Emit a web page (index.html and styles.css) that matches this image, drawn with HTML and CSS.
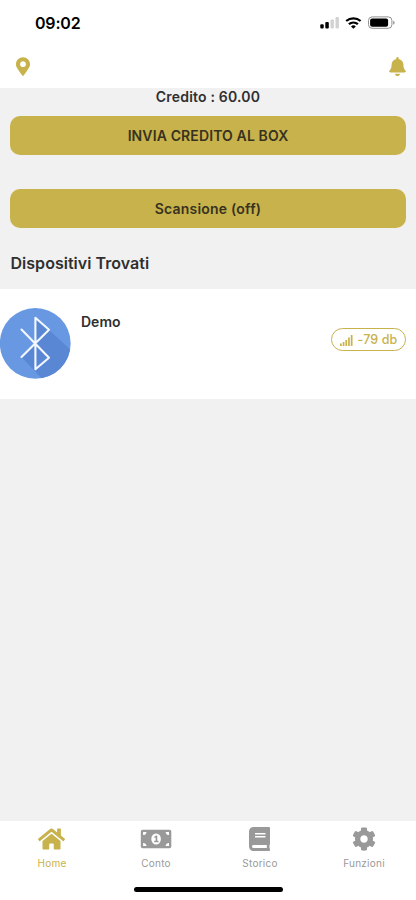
FILE: index.html
```html
<!DOCTYPE html>
<html lang="it">
<head>
<meta charset="utf-8">
<meta name="viewport" content="width=device-width, initial-scale=1">
<title>Dispositivi</title>
<link rel="stylesheet" href="styles.css">
</head>
<body>
<div class="app">
  <div class="status">
    <span class="time">09:02</span>
    <svg class="indicators" width="76" height="14" viewBox="0 0 76 14">
      <rect x="0.3" y="8.2" width="3.4" height="4.4" rx="1"/>
      <rect x="5.3" y="6" width="3.5" height="6.6" rx="1"/>
      <rect class="dim" x="10.5" y="3.5" width="3.4" height="9.1" rx="1"/>
      <rect class="dim" x="15.5" y="1" width="3.4" height="11.6" rx="1"/>
      <g class="wifi"><path d="M26.2 5a11 11 0 0 1 14.4 0"/><path d="M28.9 8.2a7 7 0 0 1 9 0"/></g>
      <path d="M33.4 12.8 31 10.4a3.5 3.5 0 0 1 4.8 0Z"/>
      <rect class="shell" x="48.5" y="0.9" width="23.4" height="11.4" rx="3.6"/>
      <rect x="50.1" y="2.5" width="18" height="8.2" rx="2"/>
      <path class="tip" d="M73.1 4.7v4q1.5-.5 1.5-2t-1.5-2Z"/>
    </svg>
  </div>
  <header class="topbar">
    <svg width="14" height="19" viewBox="0 0 384 512"><path d="M172.268 501.67C26.97 291.031 0 269.413 0 192 0 85.961 85.961 0 192 0s192 85.961 192 192c0 77.413-26.97 99.031-172.268 309.67-9.535 13.774-29.93 13.773-39.464 0zM192 272c44.183 0 80-35.817 80-80s-35.817-80-80-80-80 35.817-80 80 35.817 80 80 80z"/></svg>
    <svg width="17" height="19" viewBox="0 0 448 512"><path d="M224 512c35.32 0 63.97-28.65 63.97-64H160.03c0 35.35 28.65 64 63.97 64zm215.39-149.71c-19.32-20.76-55.47-51.99-55.47-154.29 0-77.7-54.48-139.9-127.94-155.16V32c0-17.67-14.32-32-31.98-32s-31.98 14.33-31.98 32v20.84C118.56 68.1 64.08 130.3 64.08 208c0 102.3-36.15 133.53-55.47 154.29-6 6.45-8.66 14.16-8.61 21.71.11 16.4 12.98 32 32.1 32h383.8c19.12 0 32-15.6 32.1-32 .05-7.55-2.61-15.27-8.61-21.71z"/></svg>
  </header>
  <main class="content">
    <p class="credit">Credito : 60.00</p>
    <button class="button send">INVIA CREDITO AL BOX</button>
    <button class="button scan">Scansione (off)</button>
    <h2 class="heading">Dispositivi Trovati</h2>
    <section class="device">
      <svg class="avatar" width="71" height="71" viewBox="0 0 71 71">
        <defs><clipPath id="disc"><circle cx="35.25" cy="35.4" r="35.4"/></clipPath></defs>
        <circle class="disc" cx="35.25" cy="35.4" r="35.4"/>
        <path class="shade" clip-path="url(#disc)" d="M35.3 10 49 22l24 22v30H45L21.5 49 35.3 35.5Z"/>
        <path class="rune" d="M21.5 21.5 49 49.8 35.4 61.3V9.7L49 21.8 21.5 49"/>
      </svg>
      <span class="name">Demo</span>
      <span class="signal">
        <svg width="13" height="11" viewBox="0 0 13 11"><path d="M0 8.5h1.7V11H0ZM2.7 7h1.7v4H2.7ZM5.4 5h1.7v6H5.4ZM8.1 2.6h1.7V11H8.1ZM10.8 0h1.7v11h-1.7Z"/></svg>
        <span>-79 db</span>
      </span>
    </section>
  </main>
  <nav class="tabs">
    <a class="tab active">
      <svg width="27" height="24" viewBox="0 0 576 512"><path d="M280.37 148.26L96 300.11V464a16 16 0 0 0 16 16l112.06-.29a16 16 0 0 0 15.92-16V368a16 16 0 0 1 16-16h64a16 16 0 0 1 16 16v95.64a16 16 0 0 0 16 16.05L464 480a16 16 0 0 0 16-16V300L295.67 148.26a12.19 12.19 0 0 0-15.3 0zM571.6 251.47L488 182.56V44.05a12 12 0 0 0-12-12h-56a12 12 0 0 0-12 12v72.61L318.47 43a48 48 0 0 0-61 0L4.34 251.47a12 12 0 0 0-1.6 16.9l25.5 31A12 12 0 0 0 45.15 301l235.22-193.74a12.19 12.19 0 0 1 15.3 0L530.9 301a12 12 0 0 0 16.9-1.6l25.5-31a12 12 0 0 0-1.7-16.93z"/></svg>
      <span>Home</span>
    </a>
    <a class="tab">
      <svg width="32" height="24" viewBox="0 0 32 24">
        <rect x="0.8" y="2.7" width="30.5" height="18.6" rx="1.8"/>
        <path class="cut" d="M3.1 5h3.4a3.4 3.4 0 0 1-3.4 3.1ZM29 5h-3.4A3.4 3.4 0 0 0 29 8.1ZM3.1 19v-3.1A3.4 3.4 0 0 1 6.5 19ZM29 19v-3.1a3.4 3.4 0 0 0-3.4 3.1Z"/>
        <ellipse class="cut" cx="16.1" cy="12" rx="4.8" ry="5.6"/>
        <path d="M14.2 9.8 16.1 8.4h1.2v5.4h1.2v1.4h-4.3v-1.4h1.4v-3.4l-.9.6Z"/>
      </svg>
      <span>Conto</span>
    </a>
    <a class="tab">
      <svg width="22" height="24" viewBox="0 0 448 512" preserveAspectRatio="xMinYMid meet"><path d="M448 360V24c0-13.3-10.7-24-24-24H96C43 0 0 43 0 96v320c0 53 43 96 96 96h328c13.3 0 24-10.7 24-24v-16c0-7.5-3.5-14.3-8.9-18.7-4.2-15.4-4.2-59.3 0-74.7 5.4-4.3 8.9-11.1 8.9-18.6zM128 134c0-3.3 2.7-6 6-6h212c3.3 0 6 2.7 6 6v20c0 3.3-2.7 6-6 6H134c-3.3 0-6-2.7-6-6v-20zm0 64c0-3.3 2.7-6 6-6h212c3.3 0 6 2.7 6 6v20c0 3.3-2.7 6-6 6H134c-3.3 0-6-2.7-6-6v-20zm253.4 250H96c-17.7 0-32-14.3-32-32 0-17.6 14.4-32 32-32h285.4c-1.9 17.1-1.9 46.9 0 64z"/></svg>
      <span>Storico</span>
    </a>
    <a class="tab">
      <svg width="24" height="24" viewBox="0 0 512 512"><path d="M487.4 315.7l-42.6-24.6c4.3-23.2 4.3-47 0-70.2l42.6-24.6c4.9-2.8 7.1-8.6 5.5-14-11.1-35.6-30-67.8-54.7-94.6-3.8-4.1-10-5.1-14.8-2.3L380.8 110c-17.9-15.4-38.5-27.3-60.8-35.1V25.8c0-5.6-3.9-10.5-9.4-11.7-36.7-8.2-74.3-7.8-109.2 0-5.5 1.2-9.4 6.1-9.4 11.7V75c-22.2 7.9-42.8 19.8-60.8 35.1L88.7 85.5c-4.9-2.8-11-1.9-14.8 2.3-24.7 26.7-43.6 58.9-54.7 94.6-1.7 5.4.6 11.2 5.5 14L67.3 221c-4.3 23.2-4.3 47 0 70.2l-42.6 24.6c-4.9 2.8-7.1 8.6-5.5 14 11.1 35.6 30 67.8 54.7 94.6 3.8 4.1 10 5.1 14.8 2.3l42.6-24.6c17.9 15.4 38.5 27.3 60.8 35.1v49.2c0 5.6 3.9 10.5 9.4 11.7 36.7 8.2 74.3 7.8 109.2 0 5.5-1.2 9.4-6.1 9.4-11.7v-49.2c22.2-7.9 42.8-19.8 60.8-35.1l42.6 24.6c4.9 2.8 11 1.9 14.8-2.3 24.7-26.7 43.6-58.9 54.7-94.6 1.5-5.5-.7-11.3-5.6-14.1zM256 336c-44.1 0-80-35.9-80-80s35.9-80 80-80 80 35.9 80 80-35.9 80-80 80z"/></svg>
      <span>Funzioni</span>
    </a>
  </nav>
  <div class="home-area"><div class="home-indicator"></div></div>
</div>
</body>
</html>
```
FILE: styles.css
```css
* { box-sizing: border-box; }
body { margin: 0; font-family: Inter, "Liberation Sans", sans-serif; color: #2f2f2f; }
svg { display: block; flex: none; fill: currentColor; }

.app { width: 416px; height: 900px; display: flex; flex-direction: column; background: #fff; overflow: hidden; }

.status { height: 46px; padding: 0 20px 0 35px; display: flex; align-items: center; justify-content: space-between; color: #000; }
.time { font-size: 16px; font-weight: 600; line-height: 20px; letter-spacing: -0.2px; }
.indicators .dim { fill: #d2d2d2; }
.indicators .wifi { fill: none; stroke: #000; stroke-width: 2.3; }
.indicators .shell { fill: none; stroke: #929292; }
.indicators .tip { fill: #929292; }

.topbar { height: 42.4px; padding: 0 10px 1px 16px; display: flex; align-items: center; justify-content: space-between; color: #c8b24b; }

.content { flex: 1; background: #f1f1f1; }
.credit { margin: 0; height: 27.2px; text-align: center; font-size: 14px; font-weight: 600; line-height: 17px; letter-spacing: 0.2px; }
.button { display: block; width: 396px; height: 39px; margin: 0 10px; padding: 0; border: 0; border-radius: 10px; background: #c8b24b; color: #37321f; font: 600 14px/39px Inter, sans-serif; letter-spacing: 0.12px; }
.scan { margin-top: 34.4px; letter-spacing: 0.2px; }
.heading { margin: 25px 0 0 10.5px; font-size: 16px; font-weight: 600; line-height: 20px; letter-spacing: 0.03px; }

.device { height: 110px; margin-top: 16px; padding-right: 10px; display: flex; align-items: center; background: #fff; }
.avatar .disc { fill: #6998e2; }
.avatar .shade { fill: #5987d4; }
.avatar .rune { fill: none; stroke: #f3f7ff; stroke-width: 2.1; stroke-linejoin: round; stroke-linecap: round; }
.name { align-self: flex-start; margin: 23px auto 0 10px; font-size: 14px; font-weight: 600; line-height: 20px; }
.signal { width: 75px; height: 23px; margin-top: -8px; display: flex; align-items: center; justify-content: center; gap: 5px; border: 1.3px solid #c8b24b; border-radius: 12px; color: #c8b24b; font-size: 12.5px; line-height: 21px; letter-spacing: 0.1px; font-weight: 500; white-space: nowrap; }
.signal svg { margin-top: 1px; }

.tabs { height: 59px; padding-top: 6px; display: grid; grid-template-columns: repeat(4, 1fr); color: #999; }
.tab { display: flex; flex-direction: column; align-items: center; gap: 6px; font-size: 10px; line-height: 13px; letter-spacing: 0.25px; }
.tab.active svg { margin-right: 1px; }
.tab.active { color: #c8b24b; }
.tab .cut { fill: #fff; }

.home-area { height: 20px; padding-top: 6.5px; }
.home-indicator { width: 149px; height: 5px; margin: 0 auto; border-radius: 3px; background: #000; }
```
